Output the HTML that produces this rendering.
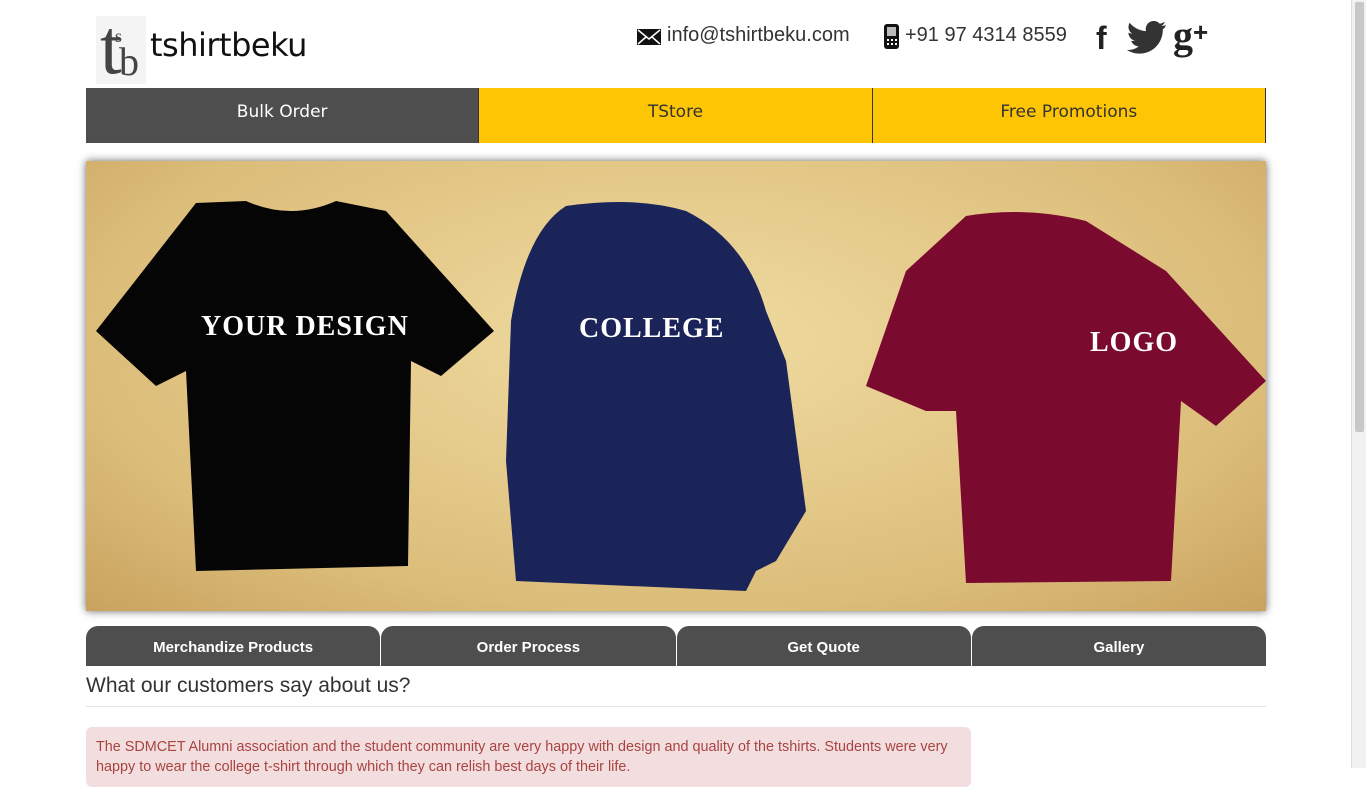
<!DOCTYPE html>
<html><head><meta charset="utf-8"><style>
*{margin:0;padding:0;box-sizing:border-box}
body{width:1366px;height:768px;overflow:hidden;background:#fff;font-family:"Liberation Sans",sans-serif;position:relative}
.sb{position:absolute;right:0;top:0;width:15px;height:768px;background:#f1f1f1;border-left:1px solid #ddd}
.sb div{position:absolute;left:3px;top:2px;width:9px;height:430px;background:#c8c8c8;border-radius:2px}
.logo{position:absolute;left:96px;top:16px;width:50px;height:68px;background:#f4f4f4}
.logo .t{position:absolute;left:4px;top:-14px;font:78px "Liberation Serif",serif;color:#444}
.logo .s{position:absolute;left:19px;top:10px;font:18px "Liberation Serif",serif;color:#444}
.logo .b{position:absolute;left:23px;top:22px;font:40px "Liberation Serif",serif;color:#444}
.brand{position:absolute;left:150px;top:26px;font-size:32px;color:#111;font-family:"DejaVu Sans","Liberation Sans",sans-serif;letter-spacing:-0.5px}
.c{position:absolute;top:24px;font-size:20px;color:#333}
.nav{position:absolute;top:88px;left:86px;width:1180px;height:55px;display:flex}
.nav div{flex:1;display:flex;align-items:center;justify-content:center;font-size:17px;font-family:"DejaVu Sans",sans-serif;color:#333;background:#fec505;border-right:1px solid #333;padding-bottom:8px}
.nav div:first-child{background:#4e4e4e;color:#fff}
.ban{position:absolute;left:86px;top:161px;width:1180px;height:450px;background:radial-gradient(ellipse at 50% 40%,#f0dca2,#dcbd7a 70%,#c9a25f);box-shadow:0 0 8px rgba(0,0,0,.6);overflow:hidden}
.lbl{position:absolute;color:#fff;font:bold 28px "Liberation Serif",serif;letter-spacing:1px}
.tabs{position:absolute;top:626px;left:86px;width:1180px;height:40px;display:flex;gap:1px}
.tabs div{flex:1;background:#4e4e4e;color:#fff;font-weight:bold;font-size:15px;display:flex;align-items:center;justify-content:center;border-radius:12px 12px 0 0;padding-top:2px}
h2{position:absolute;top:674px;left:86px;font-weight:normal;font-size:21px;color:#333}
.hr{position:absolute;top:706px;left:86px;width:1180px;border-top:1px solid #e5e5e5}
.q{position:absolute;top:727px;left:86px;width:885px;height:60px;background:#f2dede;border-radius:6px;padding:10px;color:#a94442;font-size:14.4px;line-height:20px}
</style></head><body>
<div class="sb"><div></div></div>
<div class="logo"><span class="t">t</span><span class="s">s</span><span class="b">b</span></div>
<div class="brand">tshirtbeku</div>
<svg style="position:absolute;left:637px;top:29px" width="24" height="16" viewBox="0 0 24 16"><rect width="24" height="16" fill="#111"/><path d="M1 1L12 10L23 1M1 15L9 8M23 15L15 8" stroke="#fff" stroke-width="1.5" fill="none"/></svg>
<div class="c" style="left:667px">info@tshirtbeku.com</div>
<svg style="position:absolute;left:884px;top:24px" width="15" height="25" viewBox="0 0 15 25"><rect x="0" y="0" width="15" height="25" rx="3" fill="#111"/><rect x="3" y="3" width="9" height="9" fill="#bbb"/><g fill="#fff"><rect x="3" y="15" width="2" height="2"/><rect x="7" y="15" width="2" height="2"/><rect x="11" y="15" width="2" height="2"/><rect x="3" y="19" width="2" height="2"/><rect x="7" y="19" width="2" height="2"/><rect x="11" y="19" width="2" height="2"/></g></svg>
<div class="c" style="left:905px">+91 97 4314 8559</div>
<div style="position:absolute;left:1096px;top:20px;font:bold 32px 'Liberation Sans';color:#222">f</div>
<svg style="position:absolute;left:1127px;top:21px" width="40" height="34" viewBox="0 0 40 34"><path d="M39 4c-1.4.6-3 1-4.6 1.2 1.7-1 2.9-2.6 3.5-4.4-1.6.9-3.3 1.6-5.1 2A8 8 0 0 0 19 10.1C12.4 9.8 6.5 6.6 2.6 1.8a8 8 0 0 0 2.5 10.8c-1.3 0-2.6-.4-3.700-1 0 3.900 2.800 7.200 6.500 8-1.200.300-2.400.400-3.700.100 1 3.200 4 5.600 7.600 5.600A16.500 16.500 0 0 1 0 29c3.600 2.300 7.900 3.600 12.500 3.600 15 0 23.300-12.500 23.300-23.300v-1C37.400 7.300 38.400 5.800 39 4z" fill="#333"/></svg>
<div style="position:absolute;left:1173px;top:12px;font:bold 40px 'Liberation Serif',serif;color:#222">g<span style="font:bold 26px 'Liberation Sans';position:relative;top:-8px">+</span></div>
<div class="nav"><div>Bulk Order</div><div>TStore</div><div>Free Promotions</div></div>
<div class="ban">
<svg width="1180" height="450" style="position:absolute;left:0;top:0">
<path d="M110 42L160 40Q205 60 250 40L300 50L408 170L355 215L325 200L322 405L110 410L100 210L70 225L10 170Z" fill="#050505"/>
<path d="M480 45Q550 35 600 50Q660 80 680 150L700 200L720 350L690 400L670 410L660 430L430 420L420 300L425 160Q440 70 480 45Z" fill="#1a2458"/>
<path d="M880 55Q940 45 1000 60L1080 110L1180 220L1130 265L1095 240L1085 420L880 422L870 250L840 250L780 225L820 110Z" fill="#7a0a2e"/>
</svg>
<div class="lbl" style="left:115px;top:150px">YOUR DESIGN</div>
<div class="lbl" style="left:493px;top:152px">COLLEGE</div>
<div class="lbl" style="left:1004px;top:166px">LOGO</div>
</div>
<div class="tabs"><div>Merchandize Products</div><div>Order Process</div><div>Get Quote</div><div>Gallery</div></div>
<h2>What our customers say about us?</h2>
<div class="hr"></div>
<div class="q">The SDMCET Alumni association and the student community are very happy with design and quality of the tshirts. Students were very happy to wear the college t-shirt through which they can relish best days of their life.</div>
</body></html>
